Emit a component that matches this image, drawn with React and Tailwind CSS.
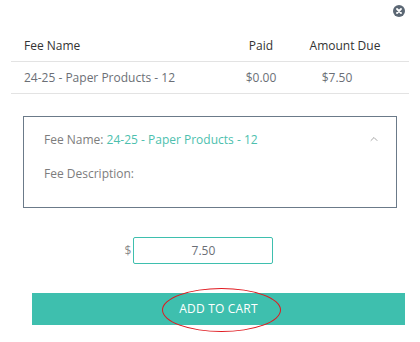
import { ChevronUp } from 'lucide-react';

export default function App() {
  const font = { fontFamily: '"Open Sans", "Liberation Sans", sans-serif' };

  return (
    <div className="relative w-[420px] h-[342px] bg-white overflow-hidden" style={font}>
      {/* close */}
      <div className="flex justify-end pt-[5px] pr-[15px]">
        <svg width="12" height="12" viewBox="0 0 12 12">
          <circle cx="6" cy="6" r="6" fill="#5b6774" />
          <path d="M4 4 L8 8 M8 4 L4 8" stroke="#fff" strokeWidth="1.8" strokeLinecap="round" />
        </svg>
      </div>

      {/* fee table */}
      <div className="mx-[11px] mt-[13px] text-[12px]">
        <div className="grid grid-cols-[1fr_70px_100px] pr-[13px] h-[32px] items-center border-b border-[#e3e3e3] text-[#333]">
          <div className="pl-[13px]">Fee Name</div>
          <div className="text-center">Paid</div>
          <div className="text-center pr-[2px]">Amount Due</div>
        </div>
        <div className="grid grid-cols-[1fr_70px_100px] pr-[13px] h-[32px] items-center border-b border-[#e3e3e3] text-[#6b6f76]">
          <div className="pl-[13px]">24-25 - Paper Products - 12</div>
          <div className="text-center">$0.00</div>
          <div className="text-center pr-[18px]">$7.50</div>
        </div>
      </div>

      {/* fee detail */}
      <div className="mx-[23px] mt-[22px] h-[92px] border border-[#6b7a89] pl-[20px] pr-[16px] pt-[14px] text-[12px] text-[#7d7d7d]">
        <div className="flex items-center justify-between">
          <div>
            Fee Name: <span className="text-[#4dbfae]">24-25 - Paper Products - 12</span>
          </div>
          <ChevronUp className="w-[12px] h-[12px] text-[#8a8a8a] -mt-[3px]" strokeWidth={1.5} />
        </div>
        <div className="mt-[16px]">Fee Description:</div>
      </div>

      {/* amount */}
      <div className="flex items-center justify-center mt-[29px] pr-[22px] text-[12px]">
        <span className="text-[#8a8a8a] mr-[2px]">$</span>
        <div className="w-[140px] h-[27px] border border-[#3ebfae] rounded-[2px] flex items-center justify-center text-[#6b6f76]">
          7.50
        </div>
      </div>

      {/* add to cart */}
      <div className="ml-[32px] mr-[15px] mt-[29px] h-[32px] bg-[#3ebfae] flex items-center justify-center text-white text-[12px] tracking-[0.2px]">
        ADD TO CART
      </div>

      {/* annotation */}
      <div className="absolute left-[162px] top-[288px] w-[119px] h-[44px] rounded-[50%] border border-[#e0191f]" />
    </div>
  );
}
